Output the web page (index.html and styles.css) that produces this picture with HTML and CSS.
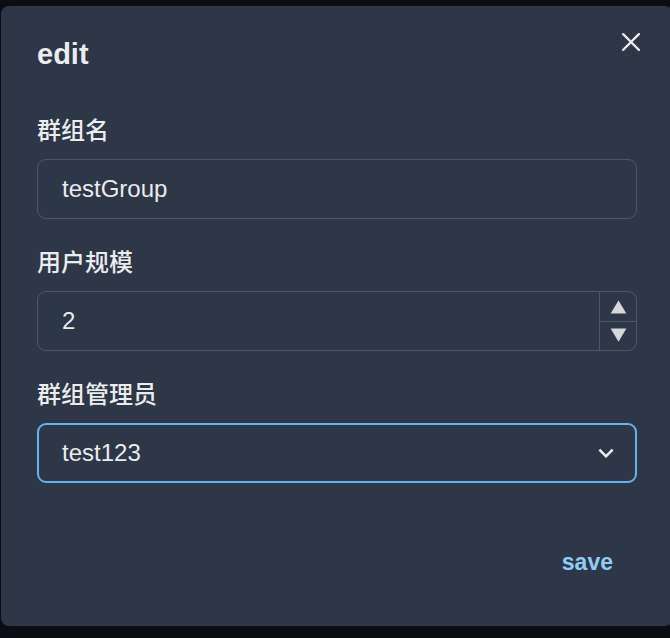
FILE: index.html
```html
<!DOCTYPE html>
<html lang="zh">
<head>
<meta charset="utf-8">
<title>edit</title>
<link rel="stylesheet" href="styles.css">
</head>
<body>
<div class="page">
  <section class="modal">
    <header class="modal-header">edit</header>
    <button class="close" aria-label="Close">
      <svg viewBox="0 0 24 24" width="18" height="18"><path fill="currentColor" d="M.439,21.44a1.5,1.5,0,0,0,2.122,2.121L11.823,14.3a.25.25,0,0,1,.354,0l9.262,9.263a1.5,1.5,0,1,0,2.122-2.121L14.3,12.177a.25.25,0,0,1,0-.354l9.263-9.262A1.5,1.5,0,0,0,21.439.44L12.177,9.7a.25.25,0,0,1-.354,0L2.561.44A1.5,1.5,0,0,0,.439,2.561L9.7,11.823a.25.25,0,0,1,0,.354Z"/></svg>
    </button>
    <div class="modal-body">
      <div class="field">
        <label class="label">群组名</label>
        <div class="control"><span class="value">testGroup</span></div>
      </div>
      <div class="field">
        <label class="label">用户规模</label>
        <div class="control number">
          <span class="value">2</span>
          <div class="stepper">
            <div class="step"><svg viewBox="0 0 24 24" width="21" height="21"><path fill="currentColor" d="M21,20H3L12,5Z"/></svg></div>
            <div class="step step-down"><svg viewBox="0 0 24 24" width="21" height="21"><path fill="currentColor" d="M21,4H3L12,19Z"/></svg></div>
          </div>
        </div>
      </div>
      <div class="field">
        <label class="label">群组管理员</label>
        <div class="control select">
          <span class="value">test123</span>
          <svg class="chevron" viewBox="0 0 24 24" width="30" height="30"><path fill="currentColor" d="M16.59 8.59L12 13.17 7.41 8.59 6 10l6 6 6-6z"/></svg>
        </div>
      </div>
    </div>
    <footer class="modal-footer">
      <button class="save">save</button>
    </footer>
  </section>
</div>
</body>
</html>
```
FILE: styles.css
```css
html, body {
  margin: 0;
  padding: 0;
  background: #0b0d12;
  overflow: hidden;
  font-family: "Liberation Sans", Arial, "Noto Sans CJK SC", sans-serif;
  color: rgba(255, 255, 255, 0.92);
}

.page {
  padding: 6px 0 0 1px;
  width: 700px;
}

.modal {
  position: relative;
  width: 672px;
  height: 620px;
  background: #2d3748;
  border-radius: 8px;
  box-sizing: border-box;
  display: flex;
  flex-direction: column;
}

.modal-header {
  padding: 26px 36px 22px;
  font-size: 29px;
  line-height: 45px;
  font-weight: 600;
}

.close {
  position: absolute;
  top: 12px;
  right: 18px;
  width: 48px;
  height: 48px;
  border: 0;
  background: transparent;
  color: rgba(255, 255, 255, 0.92);
  display: flex;
  align-items: center;
  justify-content: center;
  padding: 0;
}

.modal-body {
  padding: 12px 36px;
  display: flex;
  flex-direction: column;
  gap: 24px;
}

.label {
  display: block;
  font-size: 24px;
  line-height: 36px;
  font-weight: 500;
  margin-bottom: 12px;
  font-family: "Noto Sans CJK SC", sans-serif;
}

.control {
  height: 60px;
  box-sizing: border-box;
  border: 1px solid rgba(255, 255, 255, 0.16);
  border-radius: 9px;
  display: flex;
  align-items: center;
  padding-left: 24px;
  font-size: 24px;
}

.value {
  flex: 1;
}

.stepper {
  width: 36px;
  height: 100%;
  border-left: 1px solid rgba(255, 255, 255, 0.16);
  display: flex;
  flex-direction: column;
  color: rgba(255, 255, 255, 0.8);
}

.step {
  flex: 1;
  display: flex;
  align-items: center;
  justify-content: center;
}

.step-down {
  border-top: 1px solid rgba(255, 255, 255, 0.16);
}

.select {
  border: 2px solid #63b3ed;
  padding-left: 23px;
  padding-right: 14px;
}

.chevron {
  color: rgba(255, 255, 255, 0.92);
}

.modal-footer {
  display: flex;
  justify-content: flex-end;
  padding: 37px 36px 0;
}

.save {
  height: 60px;
  padding: 0 24px;
  border: 0;
  background: transparent;
  color: #90cdf4;
  font-family: "Liberation Sans", Arial, sans-serif;
  font-size: 23px;
  font-weight: 700;
}
```
